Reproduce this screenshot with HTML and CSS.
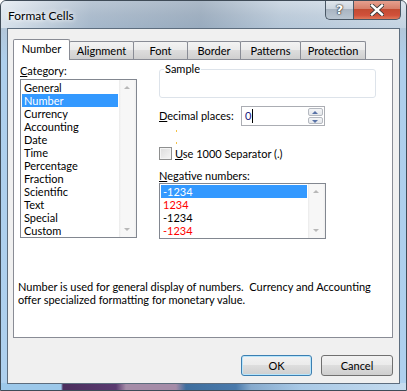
FILE: index.html
```html
<!DOCTYPE html>
<html>
<head>
    <title>Format Cells</title>
    <link rel="stylesheet" href="styles.css">
</head>
<body>
    <div class="window">
        <div class="titlebar">
            <span class="title">Format Cells</span>
            <div class="caption-buttons">
                <div class="cap-btn help">?</div>
                <div class="cap-btn close">
                    <svg width="14" height="12" viewBox="0 0 14 12">
                        <path d="M2 1.5 L12 10.5 M12 1.5 L2 10.5" stroke="#3a3a3a" stroke-width="4.2" stroke-linecap="square"/>
                        <path d="M2 1.5 L12 10.5 M12 1.5 L2 10.5" stroke="#fff" stroke-width="2.4" stroke-linecap="square"/>
                    </svg>
                </div>
            </div>
        </div>

        <div class="client">
            <div class="tabs">
                <div class="tab active tab-number">Number</div>
                <div class="tab tab-alignment">Alignment</div>
                <div class="tab tab-font">Font</div>
                <div class="tab tab-border">Border</div>
                <div class="tab tab-patterns">Patterns</div>
                <div class="tab tab-protection">Protection</div>
            </div>

            <div class="panel">
                <div class="columns">
                    <div class="col-left">
                        <div class="label"><u>C</u>ategory:</div>
                        <div class="listbox category">
                            <ul class="items">
                                <li>General</li>
                                <li class="selected">Number</li>
                                <li>Currency</li>
                                <li>Accounting</li>
                                <li>Date</li>
                                <li>Time</li>
                                <li>Percentage</li>
                                <li>Fraction</li>
                                <li>Scientific</li>
                                <li>Text</li>
                                <li>Special</li>
                                <li>Custom</li>
                            </ul>
                            <div class="vscroll">
                                <span class="arrow up"></span>
                                <span class="arrow down"></span>
                            </div>
                        </div>
                    </div>

                    <div class="col-right">
                        <fieldset class="sample">
                            <legend>Sample</legend>
                        </fieldset>

                        <div class="decimal-row">
                            <span class="label"><u>D</u>ecimal places:</span>
                            <div class="spin">
                                <div class="spin-value">0<span class="caret"></span></div>
                                <div class="spin-buttons">
                                    <div class="spin-btn"><span class="arrow up"></span></div>
                                    <div class="spin-btn"><span class="arrow down"></span></div>
                                </div>
                            </div>
                        </div>

                        <div class="dots">
                            <span class="dot"></span>
                            <span class="dot"></span>
                        </div>

                        <div class="check-row">
                            <span class="checkbox"></span>
                            <span><u>U</u>se 1000 Separator (.)</span>
                        </div>

                        <div class="label neg-label"><u>N</u>egative numbers:</div>
                        <div class="listbox negative">
                            <ul class="items">
                                <li class="selected">-1234</li>
                                <li class="red">1234</li>
                                <li>-1234</li>
                                <li class="red">-1234</li>
                            </ul>
                            <div class="vscroll">
                                <span class="arrow up"></span>
                                <span class="arrow down"></span>
                            </div>
                        </div>
                    </div>
                </div>

                <p class="description">Number is used for general display of numbers.&nbsp; Currency and Accounting<br>offer specialized formatting for monetary value.</p>
            </div>

            <div class="buttons">
                <button type="button" class="btn default">OK</button>
                <button type="button" class="btn">Cancel</button>
            </div>
        </div>
    </div>
</body>
</html>
```

FILE: styles.css
```css
* {
    box-sizing: border-box;
}

body {
    margin: 0;
    width: 407px;
    height: 391px;
    overflow: hidden;
    font-family: Lato, "Noto Sans", sans-serif;
    font-size: 11px;
    color: #000;
}

.window {
    position: relative;
    width: 407px;
    height: 391px;
    border: 1px solid #3f4b57;
    border-radius: 6px 6px 0 0;
    background:
        linear-gradient(90deg, #9cc8ea 0, #9cc8ea 60px, #4b2e5d 62px, #5a3a70 115px, #a58ca8 125px, #a58ca8 175px, #3e6e9e 185px, #4a7aab 235px, #86aacd 250px, #a9c9e6 300px, #c6dcef 407px) bottom / 100% 7px no-repeat,
        linear-gradient(180deg, #dfe7ef 0, #c4d1de 14px, #b3c7da 28px, #aecfec 60px, #aed0ee 100%);
    overflow: hidden;
}

.titlebar {
    position: relative;
    height: 27px;
    background: linear-gradient(90deg, rgba(240, 244, 248, 0.6) 0, rgba(150, 168, 188, 0.5) 90px, rgba(130, 148, 168, 0.55) 200px, rgba(180, 196, 212, 0.4) 280px, rgba(220, 230, 240, 0.4) 407px);
}

.title {
    position: absolute;
    left: 7px;
    top: 7px;
    font-size: 12px;
    color: #000;
    text-shadow: 0 0 6px #fff, 0 0 4px #fff;
}

.caption-buttons {
    position: absolute;
    top: -1px;
    right: 5px;
    display: flex;
}

.cap-btn {
    height: 20px;
    border: 1px solid #4a5866;
    border-top: none;
    display: flex;
    align-items: center;
    justify-content: center;
}

.help {
    width: 28px;
    border-right: none;
    border-radius: 0 0 0 5px;
    background: linear-gradient(180deg, #e2e8ee 0, #cdd6df 45%, #a9b5c2 50%, #b9c6d2 100%);
    font-family: "DejaVu Sans", sans-serif;
    font-weight: bold;
    font-size: 13px;
    color: #fff;
    text-shadow: 0 0 1px #333, 0 0 1px #333, 0 0 2px #333;
}

.close {
    width: 48px;
    border-radius: 0 0 5px 0;
    background: linear-gradient(180deg, #e8a493 0, #d7806b 45%, #c44b32 50%, #d0503a 80%, #e0785a 100%);
}

.client {
    margin: 0 6px 0 6px;
    height: 356px;
    border: 1px solid #5d6d7e;
    background: #f0f0f0;
}

.tabs {
    display: flex;
    align-items: flex-end;
    height: 30px;
    padding-left: 5px;
}

.tab {
    height: 18px;
    margin-left: -1px;
    border: 1px solid #898c95;
    border-bottom: none;
    border-radius: 2px 2px 0 0;
    background: linear-gradient(180deg, #f3f3f3 0, #ebebeb 45%, #dddddd 50%, #cfcfcf 100%);
    text-align: center;
    line-height: 17px;
}

.tab.active {
    position: relative;
    z-index: 1;
    height: 21px;
    margin-left: 0;
    margin-bottom: -1px;
    background: #fff;
    line-height: 18px;
}

.tab-number { width: 57px; }
.tab-alignment { width: 65px; }
.tab-font { width: 55px; }
.tab-border { width: 54px; }
.tab-patterns { width: 61px; }
.tab-protection { width: 66px; }

.panel {
    margin-left: 5px;
    width: 380px;
    height: 279px;
    border: 1px solid #898c95;
    background: #fff;
}

.columns {
    display: flex;
    padding: 3px 0 0 6px;
}

.col-left {
    width: 117px;
}

.col-right {
    width: 217px;
    margin-left: 22px;
}

.label {
    height: 16px;
    line-height: 15px;
}

u {
    text-decoration: underline;
    text-underline-offset: 1px;
}

.listbox {
    display: flex;
    border: 1px solid #828790;
    background: #fff;
}

.listbox.category {
    height: 159px;
}

.items {
    flex: 1;
    margin: 0;
    padding: 1px 1px 0 1px;
    list-style: none;
}

.items li {
    height: 13px;
    line-height: 13px;
    padding-left: 2px;
}

.items li.selected {
    background: #3399ff;
    color: #fff;
}

.items li.red {
    color: #ff0000;
}

.vscroll {
    position: relative;
    width: 17px;
    background: linear-gradient(90deg, #eaeaea 0, #f7f7f7 2px, #f7f7f7 15px, #eeeeee 17px);
}

.arrow {
    position: absolute;
    left: 5px;
    width: 0;
    height: 0;
    border-left: 3.5px solid transparent;
    border-right: 3.5px solid transparent;
}

.arrow.up {
    top: 6px;
    border-bottom: 3px solid #b8b8b8;
}

.arrow.down {
    bottom: 6px;
    border-top: 3px solid #b8b8b8;
}

.sample {
    height: 35px;
    margin: 0;
    padding: 0;
    border: 1px solid #dde3ea;
    border-radius: 3px;
}

.sample legend {
    margin-left: 4px;
    padding: 0 1px;
    line-height: 12px;
}

.decimal-row {
    display: flex;
    align-items: center;
    justify-content: space-between;
    width: 166px;
    margin-top: 8px;
}

.spin {
    display: flex;
    width: 84px;
    height: 20px;
    border: 1px solid #abadb3;
    background: #fff;
}

.spin-value {
    flex: 1;
    padding-left: 3px;
    line-height: 18px;
    color: #1a1a80;
}

.caret {
    display: inline-block;
    width: 1px;
    height: 14px;
    margin-left: 1px;
    vertical-align: -3px;
    background: #000;
}

.spin-buttons {
    display: flex;
    flex-direction: column;
    gap: 1px;
    width: 16px;
    padding: 1px 1px 1px 0;
}

.spin-btn {
    position: relative;
    flex: 1;
    border: 1px solid #b5b9c0;
    border-radius: 2px;
    background: linear-gradient(180deg, #f4f5f7 0, #e4e7eb 100%);
}

.spin-btn .arrow {
    left: 3px;
}

.spin-btn .arrow.up {
    top: 2px;
    border-bottom-color: #5872a6;
}

.spin-btn .arrow.down {
    top: 2px;
    bottom: auto;
    border-top-color: #5872a6;
}

.dots {
    height: 21px;
    padding: 4px 0 0 17px;
}

.dot {
    display: block;
    width: 1px;
    height: 2px;
    margin-bottom: 10px;
    background: #f4c246;
}

.check-row {
    display: flex;
    align-items: center;
    gap: 3px;
    height: 13px;
}

.checkbox {
    width: 13px;
    height: 13px;
    border: 1px solid #8e8f8f;
    background: linear-gradient(135deg, #dcdcdc 0, #f5f5f5 100%);
    box-shadow: inset 0 0 0 1px #f4f4f4;
}

.neg-label {
    margin-top: 8px;
    height: 15px;
}

.listbox.negative {
    width: 167px;
    height: 56px;
}

.description {
    margin: 41px 0 0 4px;
    line-height: 13px;
    white-space: nowrap;
}

.buttons {
    display: flex;
    justify-content: flex-end;
    gap: 9px;
    padding: 17px 6px 0 0;
}

.btn {
    width: 72px;
    height: 21px;
    padding: 0;
    border: 1px solid #707070;
    border-radius: 3px;
    background: linear-gradient(180deg, #f2f2f2 0, #ebebeb 45%, #dddddd 50%, #cfcfcf 100%);
    font-family: Lato, "Noto Sans", sans-serif;
    font-size: 11px;
    color: #000;
}

.btn.default {
    width: 71px;
    border-color: #3c7fb1;
    box-shadow: inset 0 0 0 1px #b8e5fb;
}
```
